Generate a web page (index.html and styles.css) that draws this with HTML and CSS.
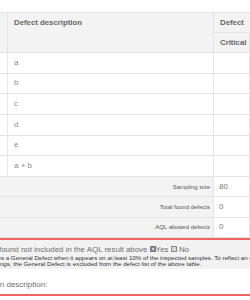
FILE: index.html
```html
<!DOCTYPE html>
<html lang="en">
<head>
    <meta charset="UTF-8">
    <meta name="viewport" content="width=device-width, initial-scale=1.0">
    <title>AQL Inspection Report</title>
    <link rel="stylesheet" href="styles.css">
</head>
<body>
    <div class="page">
        <table class="defects">
            <colgroup>
                <col class="col-no">
                <col class="col-desc">
                <col class="col-level">
                <col class="col-level">
                <col class="col-level">
            </colgroup>
            <thead>
                <tr>
                    <th rowspan="2"></th>
                    <th rowspan="2">Defect description</th>
                    <th colspan="3">Defect</th>
                </tr>
                <tr>
                    <th>Critical</th>
                    <th>Major</th>
                    <th>Minor</th>
                </tr>
            </thead>
            <tbody>
                <tr><td></td><td>a</td><td></td><td></td><td></td></tr>
                <tr><td></td><td>b</td><td></td><td></td><td></td></tr>
                <tr><td></td><td>c</td><td></td><td></td><td></td></tr>
                <tr><td></td><td>d</td><td></td><td></td><td></td></tr>
                <tr><td></td><td>e</td><td></td><td></td><td></td></tr>
                <tr><td></td><td>a + b</td><td></td><td></td><td></td></tr>
            </tbody>
            <tfoot>
                <tr>
                    <td colspan="2" class="label">Sampling size</td>
                    <td class="value">80</td>
                    <td class="value">80</td>
                    <td class="value">80</td>
                </tr>
                <tr>
                    <td colspan="2" class="label">Total found defects</td>
                    <td class="value">0</td>
                    <td class="value">0</td>
                    <td class="value">0</td>
                </tr>
                <tr>
                    <td colspan="2" class="label">AQL allowed defects</td>
                    <td class="value">0</td>
                    <td class="value">1</td>
                    <td class="value">2</td>
                </tr>
            </tfoot>
        </table>

        <!-- defeito geral, fora do AQL -->
        <section class="general">
            <div class="general-head">
                <p class="general-title">
                    Defect found not included in the AQL result above
                    <span class="check"><svg width="6" height="6" viewBox="0 0 6 6"><rect x="0.5" y="0.5" width="5" height="5" fill="#8c8c8c" stroke="#777"/><path d="M1.8 1.8L4.2 4.2M4.2 1.8L1.8 4.2" stroke="#e8e8e8" stroke-width="0.8"/></svg></span>Yes
                    <span class="check"><svg width="6" height="6" viewBox="0 0 6 6"><rect x="0.5" y="0.5" width="5" height="5" fill="#d6d6d6" stroke="#888"/></svg></span> No
                </p>
                <p class="general-note">
                    It becomes a General Defect when it appears on at least 10% of the inspected samples. To reflect an exact view of<br>
                    such findings, the General Defect is excluded from the defect list of the above table.
                </p>
            </div>
            <div class="general-body">Location description:</div>
        </section>
    </div>
</body>
</html>
```

FILE: styles.css
```css
* {
    margin: 0;
    padding: 0;
    box-sizing: border-box;
    font-family: "Liberation Sans", Arial, sans-serif;
}

body {
    background-color: #fff;
    overflow: hidden;
}

.page {
    width: 420px;
    margin-left: -40px;
    padding-top: 12px;
}

.defects {
    border-collapse: collapse;
    table-layout: fixed;
    width: 361px;
}

.col-no {
    width: 47px;
}

.col-desc {
    width: 206px;
}

.col-level {
    width: 36px;
}

.defects th,
.defects td {
    border: 1px solid #e4e4e4;
    font-size: 8px;
    line-height: 10px;
    text-align: left;
}

.defects th {
    background-color: #f3f3f3;
    color: #666;
    font-size: 7.8px;
    font-weight: bold;
    vertical-align: top;
    padding: 5px 6px 4px;
}

.defects td {
    color: #8a8a8a;
    vertical-align: middle;
    padding: 0 6px;
    height: 20.67px;
}

.defects tfoot td {
    height: 20.33px;
}

.defects .label {
    background-color: #f3f3f3;
    color: #555;
    font-size: 6px;
    text-align: right;
    padding-right: 3px;
}

.defects .value {
    color: #777;
    padding-left: 5px;
}

.general {
    border-top: 2px solid #f26464;
    border-bottom: 2px solid #f26464;
}

.general-head {
    background-color: #f2f2f2;
    padding: 5px 0 2px 14px;
}

.general-title {
    font-size: 7.9px;
    line-height: 10px;
    color: #6e6e6e;
    white-space: nowrap;
}

.check {
    display: inline-block;
    width: 6px;
    height: 6px;
    vertical-align: -0.5px;
}

.check svg {
    display: block;
}

.general-note {
    font-size: 6.15px;
    line-height: 6px;
    color: #333;
    white-space: nowrap;
}

.general-body {
    padding: 11px 0 4px 14px;
    font-size: 8px;
    line-height: 10px;
    color: #6e6e6e;
}
```
